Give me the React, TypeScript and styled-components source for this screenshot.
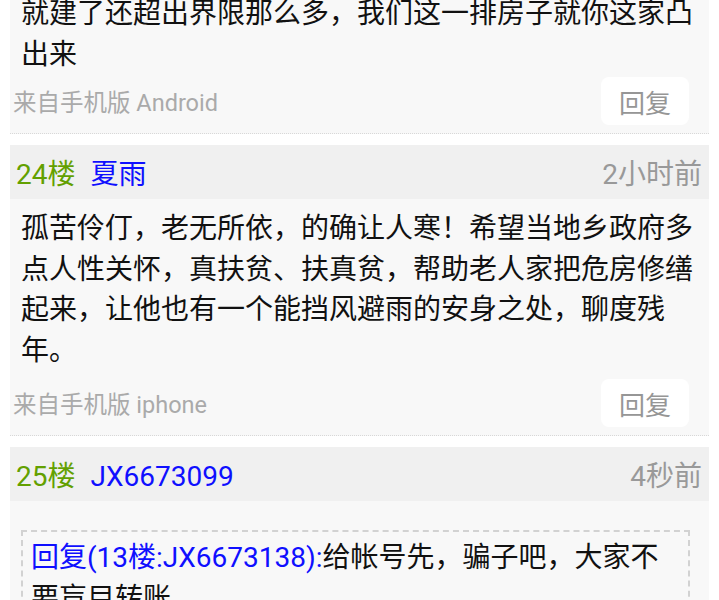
import { ReactNode } from 'react';
import styled, { createGlobalStyle } from 'styled-components';

const GlobalStyle = createGlobalStyle`
  html, body {
    margin: 0;
    padding: 0;
    background: #ffffff;
  }
  body {
    font-family: Roboto, "Noto Sans CJK SC", sans-serif;
    overflow: hidden;
  }
`;

// the list is scrolled a little, so the first post starts above the window
const List = styled.div`
  display: flex;
  flex-direction: column;
  gap: 11px;
  margin: -22px 10px 0 10px;
`;

const Post = styled.div`
  display: flex;
  flex-direction: column;
`;

const Header = styled.div`
  display: flex;
  align-items: center;
  justify-content: space-between;
  height: 54px;
  padding: 0 7px 0 6px;
  background-color: #f0f0f0;
  font-size: 28px;
`;

const Floor = styled.span`
  color: #63a000;
`;

const User = styled.span`
  color: #0f0fff;
  margin-left: 15px;
`;

const Time = styled.span`
  color: #999999;
`;

const Body = styled.div`
  display: flex;
  flex-direction: column;
  background-color: #f8f8f8;
  border-bottom: 1px dotted #d8d8d8;
`;

const Content = styled.div<{ $top: number }>`
  padding: ${(p) => p.$top}px 14px 0 11px;
  font-size: 28px;
  line-height: 40.5px;
  color: #111111;
  word-break: break-all;
`;

const Quote = styled.div`
  margin: 19px 5px 0 0;
  padding: 6px 10px 6px 8px;
  border: 2px dashed #d2d2d2;
`;

const QuoteRef = styled.span`
  color: #0f0fff;
`;

const Meta = styled.div<{ $gap: number }>`
  display: flex;
  align-items: center;
  justify-content: space-between;
  margin-top: ${(p) => p.$gap}px;
  padding: 0 20px 8px 3px;
`;

const Source = styled.span`
  font-size: 23.5px;
  color: #aaaaaa;
`;

const ReplyButton = styled.button`
  height: 48px;
  width: 88px;
  border: none;
  border-radius: 8px;
  background-color: #ffffff;
  color: #969696;
  font-family: inherit;
  font-size: 26px;
  padding: 0;
`;

type PostProps = {
  floor?: string;
  user?: string;
  time?: string;
  source?: string;
  tight?: boolean;
  children?: ReactNode;
};

function PostItem({ floor, user, time, source, tight, children }: PostProps) {
  return (
    <Post>
      {floor && (
        <Header>
          <div>
            <Floor>{floor}</Floor>
            <User>{user}</User>
          </div>
          <Time>{time}</Time>
        </Header>
      )}
      <Body>
        <Content $top={tight ? 16 : 10}>{children}</Content>
        {source && (
          <Meta $gap={tight ? 2 : 8}>
            <Source>{source}</Source>
            <ReplyButton>回复</ReplyButton>
          </Meta>
        )}
      </Body>
    </Post>
  );
}

export default function App() {
  return (
    <>
      <GlobalStyle />
      <List>
        <PostItem source="来自手机版 Android" tight>
          就建了还超出界限那么多，我们这一排房子就你这家凸出来
        </PostItem>
        <PostItem floor="24楼" user="夏雨" time="2小时前" source="来自手机版 iphone">
          孤苦伶仃，老无所依，的确让人寒！希望当地乡政府多点人性关怀，真扶贫、扶真贫，帮助老人家把危房修缮起来，让他也有一个能挡风避雨的安身之处，聊度残年。
        </PostItem>
        <PostItem floor="25楼" user="JX6673099" time="4秒前" source="来自手机版 Android">
          <Quote>
            <QuoteRef>回复(13楼:JX6673138):</QuoteRef>
            给帐号先，骗子吧，大家不要盲目转账。
          </Quote>
        </PostItem>
      </List>
    </>
  );
}
